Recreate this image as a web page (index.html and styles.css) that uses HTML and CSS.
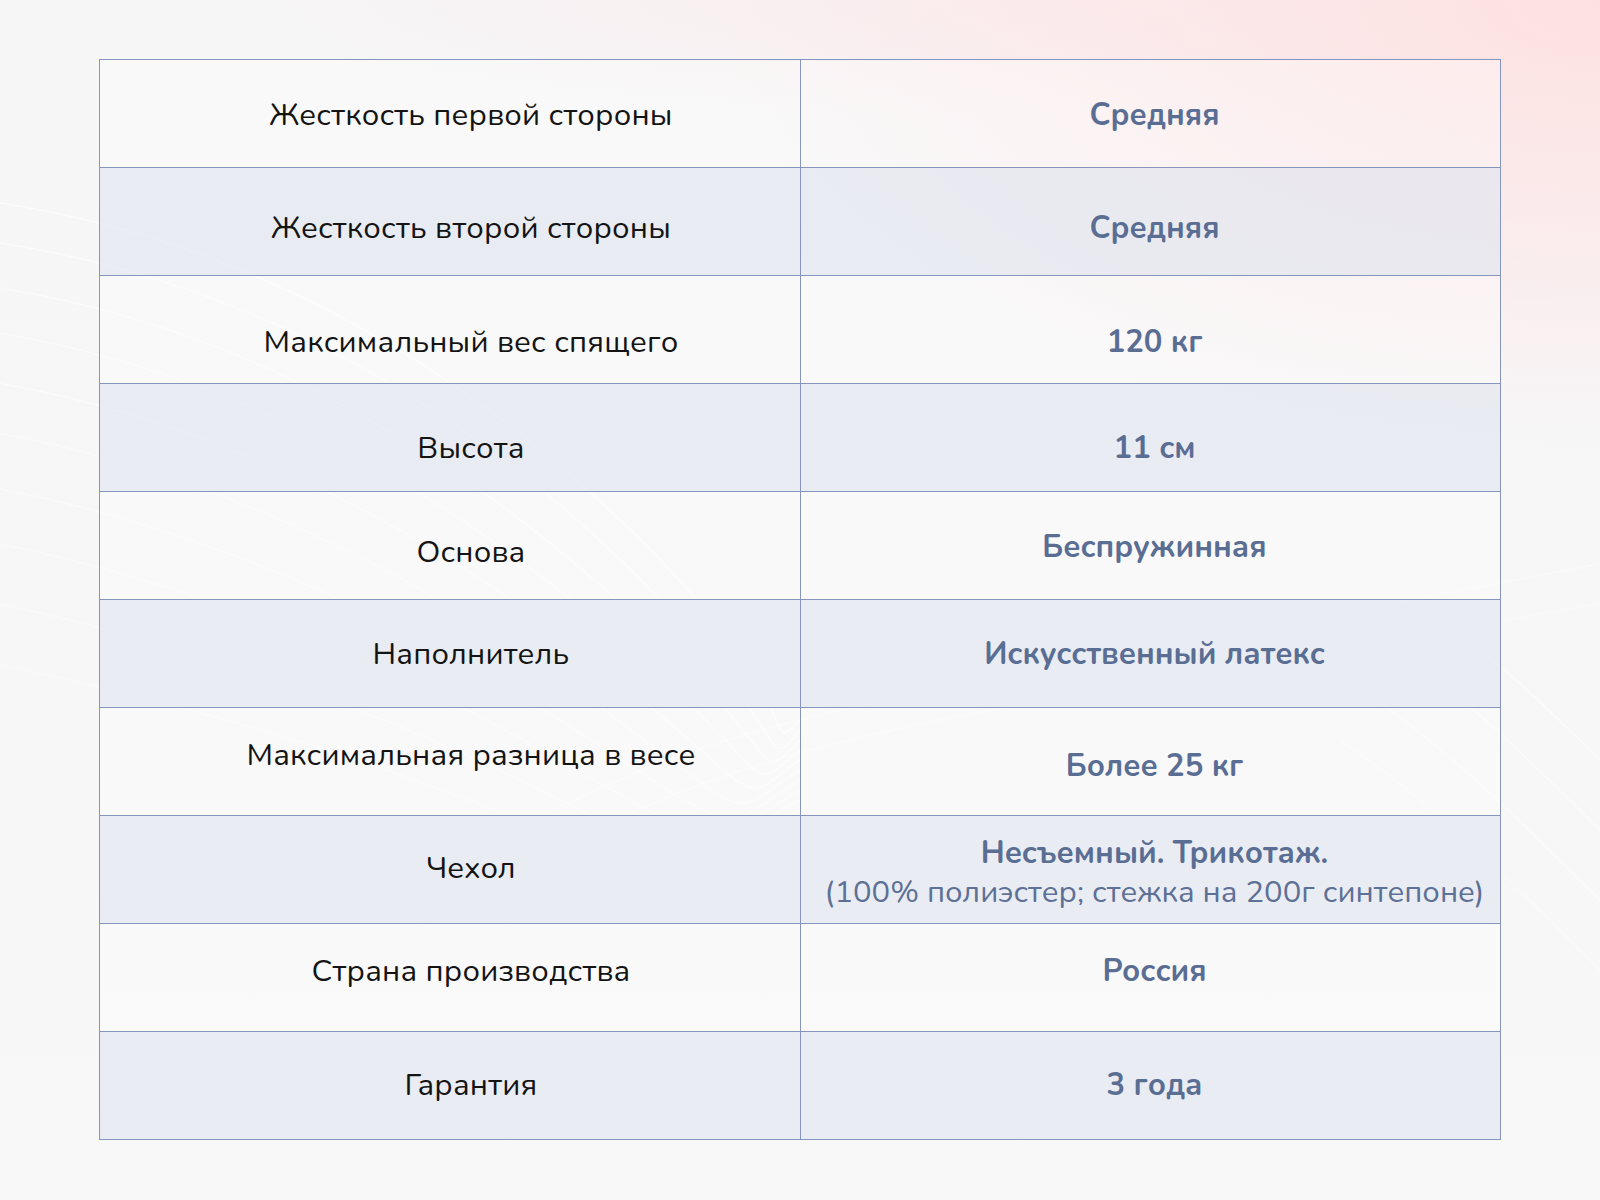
FILE: index.html
```html
<!DOCTYPE html>
<html lang="ru">
<head>
<meta charset="utf-8">
<title>Характеристики</title>
<link rel="stylesheet" href="styles.css">
</head>
<body>
<svg class="waves" width="1600" height="1200" viewBox="0 0 1600 1200" aria-hidden="true">
  <g fill="none" stroke="#ffffff" stroke-width="1.6">
    <path d="M-20 200 C 200 230, 420 330, 620 520 S 760 760, 800 720" opacity="0.55"/>
    <path d="M-20 240 C 200 270, 420 370, 610 550 S 760 780, 800 730" opacity="0.5"/>
    <path d="M-20 285 C 190 315, 400 410, 600 585 S 750 790, 800 740" opacity="0.5"/>
    <path d="M-20 330 C 180 360, 390 450, 590 615 S 740 800, 800 750" opacity="0.45"/>
    <path d="M-20 380 C 170 410, 380 495, 580 650 S 730 810, 800 760" opacity="0.45"/>
    <path d="M-20 430 C 160 460, 370 540, 570 685 S 720 820, 800 770" opacity="0.4"/>
    <path d="M-20 485 C 150 515, 360 590, 560 720 S 715 830, 800 780" opacity="0.4"/>
    <path d="M-20 540 C 140 570, 350 640, 550 755 S 710 840, 800 790" opacity="0.35"/>
    <path d="M-20 600 C 130 630, 340 690, 540 790 S 700 850, 800 800" opacity="0.35"/>
    <path d="M-20 660 C 120 690, 330 740, 530 825 S 690 860, 800 810" opacity="0.3"/>
    <path d="M400 900 C 520 820, 640 760, 800 720 S 1100 660, 1620 560" opacity="0.35"/>
    <path d="M420 930 C 540 850, 660 790, 810 750 S 1110 690, 1620 600" opacity="0.3"/>
    <path d="M1400 600 C 1480 640, 1540 700, 1620 780" opacity="0.5"/>
    <path d="M1380 640 C 1460 690, 1530 760, 1620 850" opacity="0.45"/>
    <path d="M1360 690 C 1440 740, 1520 820, 1620 920" opacity="0.4"/>
    <path d="M1340 740 C 1430 800, 1510 880, 1620 990" opacity="0.35"/>
  </g>
</svg>
<div class="page">
  <div class="specs">
    <div class="row">
      <div class="cell label s1">Жесткость первой стороны</div>
      <div class="cell value s1">Средняя</div>
    </div>
    <div class="row alt">
      <div class="cell label s6">Жесткость второй стороны</div>
      <div class="cell value s6">Средняя</div>
    </div>
    <div class="row">
      <div class="cell label s12">Максимальный вес спящего</div>
      <div class="cell value s12">120 кг</div>
    </div>
    <div class="row alt">
      <div class="cell label s10">Высота</div>
      <div class="cell value s10">11 см</div>
    </div>
    <div class="row">
      <div class="cell label s6">Основа</div>
      <div class="cell value s1">Беспружинная</div>
    </div>
    <div class="row alt">
      <div class="cell label s0">Наполнитель</div>
      <div class="cell value s0">Искусственный латекс</div>
    </div>
    <div class="row">
      <div class="cell label u7">Максимальная разница в весе</div>
      <div class="cell value s4">Более 25 кг</div>
    </div>
    <div class="row alt">
      <div class="cell label u2">Чехол</div>
      <div class="cell value s2">
        <span class="strong">Несъемный. Трикотаж.</span>
        <span class="note">(100% полиэстер; стежка на 200г синтепоне)</span>
      </div>
    </div>
    <div class="row">
      <div class="cell label u7">Страна производства</div>
      <div class="cell value u7">Россия</div>
    </div>
    <div class="row alt">
      <div class="cell label u1">Гарантия</div>
      <div class="cell value u1">3 года</div>
    </div>
  </div>
</div>
</body>
</html>
```

FILE: styles.css
```css
html, body {
  margin: 0;
  padding: 0;
}

body {
  position: relative;
  width: 1600px;
  height: 1200px;
  overflow: hidden;
  font-family: "Nunito", "Lato", "Open Sans", sans-serif;
  background:
    radial-gradient(ellipse 1100px 560px at 1600px 0px, rgba(253, 225, 225, 1) 0%, rgba(252, 231, 232, 0.75) 40%, rgba(250, 240, 242, 0) 80%),
    radial-gradient(ellipse 900px 120px at 1100px 0px, rgba(251, 234, 236, 0.8) 0%, rgba(251, 236, 238, 0) 100%),
    linear-gradient(180deg, #f6f6f7 0%, #f7f7f8 60%, #f8f8f8 100%);
}

.waves {
  position: absolute;
  left: 0;
  top: 0;
  z-index: 0;
  pointer-events: none;
}

.page {
  position: relative;
  z-index: 1;
  padding: 59px 99px 0 99px;
}

.specs {
  width: 1402px;
  border: 1px solid #8595bb;
  box-sizing: border-box;
}

.row {
  display: grid;
  grid-template-columns: 701px 1fr;
  height: 108px;
  box-sizing: border-box;
  border-top: 1px solid #8595bb;
  background: rgba(255, 255, 255, 0.3);
}

.row:first-child {
  border-top: none;
  height: 107px;
}

.row.alt {
  background: rgba(226, 231, 240, 0.7);
}

.cell {
  display: flex;
  flex-direction: column;
  align-items: center;
  justify-content: center;
  text-align: center;
  font-size: 31px;
  line-height: 39px;
}

.cell.label {
  color: #141414;
  border-right: 1px solid #8595bb;
  font-weight: 400;
  letter-spacing: 0.2px;
  padding-left: 42px;
}

.cell.value {
  color: #5a6e94;
  font-weight: 700;
  padding-left: 8px;
}

.value .strong {
  font-weight: 700;
}

.value .note {
  font-weight: 400;
  color: #5d7096;
}

/* small vertical nudges of the text inside a cell */
.s0 { padding-top: 2px; }
.s1 { padding-top: 4px; }
.s2 { padding-top: 6px; }
.s4 { padding-top: 10px; }
.s6 { padding-top: 14px; }
.s10 { padding-top: 22px; }
.s12 { padding-top: 26px; }
.u1 { padding-bottom: 0; }
.u2 { padding-bottom: 2px; }
.u7 { padding-bottom: 12px; }
```
